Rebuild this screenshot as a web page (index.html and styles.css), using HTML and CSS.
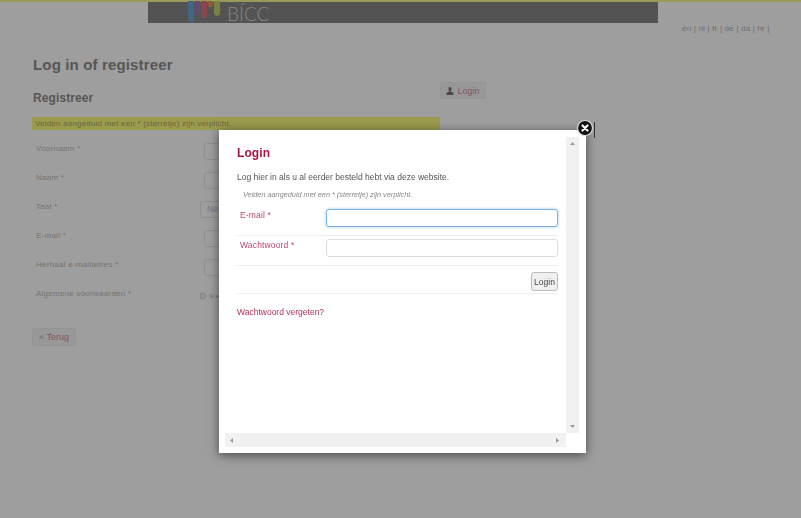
FILE: index.html
```html
<!DOCTYPE html>
<html lang="nl">
<head>
<meta charset="utf-8">
<title>Log in of registreer</title>
<link rel="stylesheet" href="styles.css">
</head>
<body>
<div class="page">
  <header class="top">
    <div class="banner">
      <svg class="logo-drops" width="34" height="23" viewBox="0 0 34 23">
        <path d="M1 0h6v19q-3 5-6 0z" fill="#6aa6d6"/>
        <path d="M8 0h5v11q-2.500 4-5 0z" fill="#a774c0"/>
        <path d="M14 0h6v15q-3 4-6 0z" fill="#d8747c"/>
        <path d="M21 0h5v5q-2.500 3-5 0z" fill="#e0926a"/>
        <path d="M27 0h6v13q-3 4-6 0z" fill="#c4d270"/>
      </svg>
      <span class="logo-text">BÍCC</span>
    </div>
    <nav class="langs">en | nl | fr | de | da | hr |</nav>
  </header>
  <main class="content">
    <h1 class="page-title">Log in of registreer</h1>
    <div class="columns">
      <section class="register">
        <h2 class="section-title">Registreer</h2>
        <div class="required-bar">Velden aangeduid met een * (sterretje) zijn verplicht.</div>
        <div class="form-row"><label class="row-label">Voornaam *</label><input class="row-input" type="text"></div>
        <div class="form-row"><label class="row-label">Naam *</label><input class="row-input" type="text"></div>
        <div class="form-row"><label class="row-label">Taal *</label><div class="row-select">Ne</div></div>
        <div class="form-row"><label class="row-label">E-mail *</label><input class="row-input" type="text"></div>
        <div class="form-row"><label class="row-label">Herhaal e-mailadres *</label><input class="row-input" type="text"></div>
        <div class="form-row"><label class="row-label">Algemene voorwaarden *</label><span class="row-check"><span class="check-box"></span>Ik a</span></div>
        <a class="btn-back"><span class="btn-mark">«</span> Terug</a>
      </section>
      <a class="btn-login">
        <svg width="8" height="8" viewBox="0 0 9 9"><path d="M4.500 0C3.300 0 2.700.9 2.700 2.200c0 1 .5 1.800.9 2.200v.7L.6 6.500V9h7.800V6.500L5.400 5.100v-.7c.4-.4.9-1.200.9-2.200C6.300.9 5.700 0 4.500 0z" fill="#777"/></svg>
        Login
      </a>
    </div>
  </main>
</div>
<div class="overlay"></div>
<div class="modal">
  <div class="frame">
    <div class="frame-main">
      <div class="frame-body">
        <h2 class="modal-title">Login</h2>
        <p class="modal-intro">Log hier in als u al eerder besteld hebt via deze website.</p>
        <p class="modal-note">Velden aangeduid met een * (sterretje) zijn verplicht.</p>
        <div class="login-row first"><label class="login-label">E-mail *</label><input class="login-input focused" type="text"></div>
        <div class="login-row"><label class="login-label">Wachtwoord *</label><input class="login-input" type="text"></div>
        <div class="login-actions"><button class="login-submit" type="button">Login</button></div>
        <a class="forgot">Wachtwoord vergeten?</a>
      </div>
      <div class="scroll-v">
        <svg width="5" height="3" viewBox="0 0 5 3"><path d="M2.500 0L5 3H0z" fill="#999"/></svg>
        <svg width="5" height="3" viewBox="0 0 5 3"><path d="M2.500 3L5 0H0z" fill="#999"/></svg>
      </div>
    </div>
    <div class="scroll-h">
      <svg width="3" height="5" viewBox="0 0 3 5"><path d="M0 2.500L3 0v5z" fill="#999"/></svg>
      <svg width="3" height="5" viewBox="0 0 3 5"><path d="M3 2.500L0 0v5z" fill="#999"/></svg>
    </div>
  </div>
  <svg class="close" width="18" height="18" viewBox="0 0 18 18">
    <circle cx="9" cy="9" r="7.500" fill="#111" stroke="#ddd" stroke-width="1.200"/>
    <path d="M6.500 6.500l5 5M11.500 6.500l-5 5" stroke="#fff" stroke-width="2.200" stroke-linecap="round"/>
  </svg>
  <div class="close-edge"></div>
</div>
</body>
</html>
```

FILE: styles.css
```css
* { box-sizing: border-box; }
html, body { margin: 0; height: 100%; overflow: hidden; }
body { background: #fff; font-family: "Liberation Sans", Arial, sans-serif; color: #555; }

.page { height: 518px; border-top: 2px solid #fbfb90; }
.top { display: flex; height: 58px; padding-left: 148px; }
.banner { width: 510px; height: 21px; background: #868686; position: relative; }
.logo-drops { position: absolute; left: 39px; top: -1px; }
.logo-text { position: absolute; left: 79px; top: 2px; font-family: "Lato", "Liberation Sans", sans-serif; font-size: 19px; line-height: 20px; color: #d6d6d6; font-weight: 300; }
.langs { margin: 22px 0 0 24px; font-size: 8px; line-height: 10px; color: #b0b0b0; letter-spacing: .2px; white-space: nowrap; }

.content { padding-left: 32px; }
.page-title { margin: 0; height: 22px; padding-left: 1px; font-size: 15px; line-height: 10px; font-weight: 700; color: #8c8c8c; letter-spacing: .15px; }
.columns { display: flex; align-items: flex-start; }
.register { width: 408px; padding-top: 9px; }
.section-title { margin: 0 0 11px; padding-left: 1px; font-size: 12px; line-height: 15px; font-weight: 700; color: #8c8c8c; letter-spacing: .1px; }
.required-bar { height: 13px; background: #fbfb7e; font-size: 8px; line-height: 13px; padding-left: 3px; color: #a8a860; letter-spacing: .2px; white-space: nowrap; }
.form-row { display: flex; align-items: center; height: 29px; padding-left: 4px; position: relative; top: 4px; }
.row-label { width: 168px; font-size: 8px; color: #bcbcbc; letter-spacing: .25px; }
.row-input { width: 140px; height: 17px; margin-top: 6px; border: 1px solid #e8e8e8; background: #fff; border-radius: 3px; padding: 0; }
.row-select { width: 24px; height: 17px; margin: 6px 0 0 -4px; border: 1px solid #e8e8e8; border-radius: 3px; font-size: 8.500px; line-height: 15px; padding-left: 6px; color: #c4c4c4; background: #fff; }
.row-check { display: flex; align-items: center; margin: 4px 0 0 -4px; font-size: 6px; color: #b4b4b4; }
.check-box { width: 6px; height: 6px; border: 1px solid #d4d4d4; border-radius: 1px; margin-right: 3px; background: #f4f4f4; }
.btn-back { display: block; width: 44px; height: 18px; margin-top: 24px; border: 1px solid #efefef; border-radius: 2px; background: #f6f6f6; font-size: 9px; line-height: 16px; text-align: center; color: #d08aa0; }
.btn-mark { color: #aaa; }
.btn-login { display: flex; align-items: center; justify-content: center; gap: 3px; width: 46px; height: 17px; border: 1px solid #efefef; border-radius: 2px; background: #f6f6f6; font-size: 9px; color: #d08aa0; }

.overlay { position: fixed; inset: 0; background: rgba(0, 0, 0, .38); }

.modal { position: absolute; left: 219px; top: 130px; width: 367px; height: 323px; background: #fff; box-shadow: 0 2px 10px rgba(0, 0, 0, .55); padding: 7px 7px 6px 6px; }
.frame { height: 310px; display: flex; flex-direction: column; }
.frame-main { flex: 1; display: flex; min-height: 0; }
.frame-body { flex: 1; padding: 9px 8px 0 12px; }
.modal-title { margin: 0; font-size: 12px; line-height: 15px; font-weight: 700; color: #a5173f; letter-spacing: .1px; }
.modal-intro { margin: 11px 0 0; font-size: 8.500px; line-height: 11px; color: #555; }
.modal-note { margin: 7px 0 0 6px; font-size: 7.300px; line-height: 9px; font-style: italic; color: #888; }
.login-row { display: flex; align-items: flex-start; height: 30px; border-bottom: 1px solid #eee; padding-top: 3px; }
.login-row.first { margin-top: 10px; height: 27px; padding-top: 0; }
.login-label { width: 89px; padding-left: 3px; font-size: 8.500px; line-height: 12px; color: #a5173f; opacity: .8; letter-spacing: .15px; }
.login-input { width: 232px; height: 18px; border: 1px solid #ddd; border-radius: 3px; background: #fff; padding: 0; }
.login-input.focused { border-color: #7fb4e2; box-shadow: 0 0 3px rgba(82, 168, 236, .6); outline: none; }
.login-actions { display: flex; justify-content: flex-end; height: 28px; padding-top: 6px; border-bottom: 1px solid #eee; }
.login-submit { width: 27px; height: 19px; padding: 0; border: 1px solid #bbb; border-radius: 3px; background: #f0f0f0; font: 8.500px "Liberation Sans", Arial, sans-serif; color: #444; }
.forgot { display: block; margin-top: 13px; font-size: 8.500px; line-height: 11px; color: #a5173f; opacity: .9; }
.scroll-v { width: 13px; background: #f1f1f1; display: flex; flex-direction: column; align-items: center; justify-content: space-between; padding: 5px 0; }
.scroll-h { height: 14px; width: 341px; background: #f1f1f1; display: flex; align-items: center; justify-content: space-between; padding: 0 7px 0 5px; }

.close { position: absolute; right: -8px; top: -11px; }
.close-edge { position: absolute; left: 375px; top: -8px; width: 1px; height: 16px; background: #333; }
```
